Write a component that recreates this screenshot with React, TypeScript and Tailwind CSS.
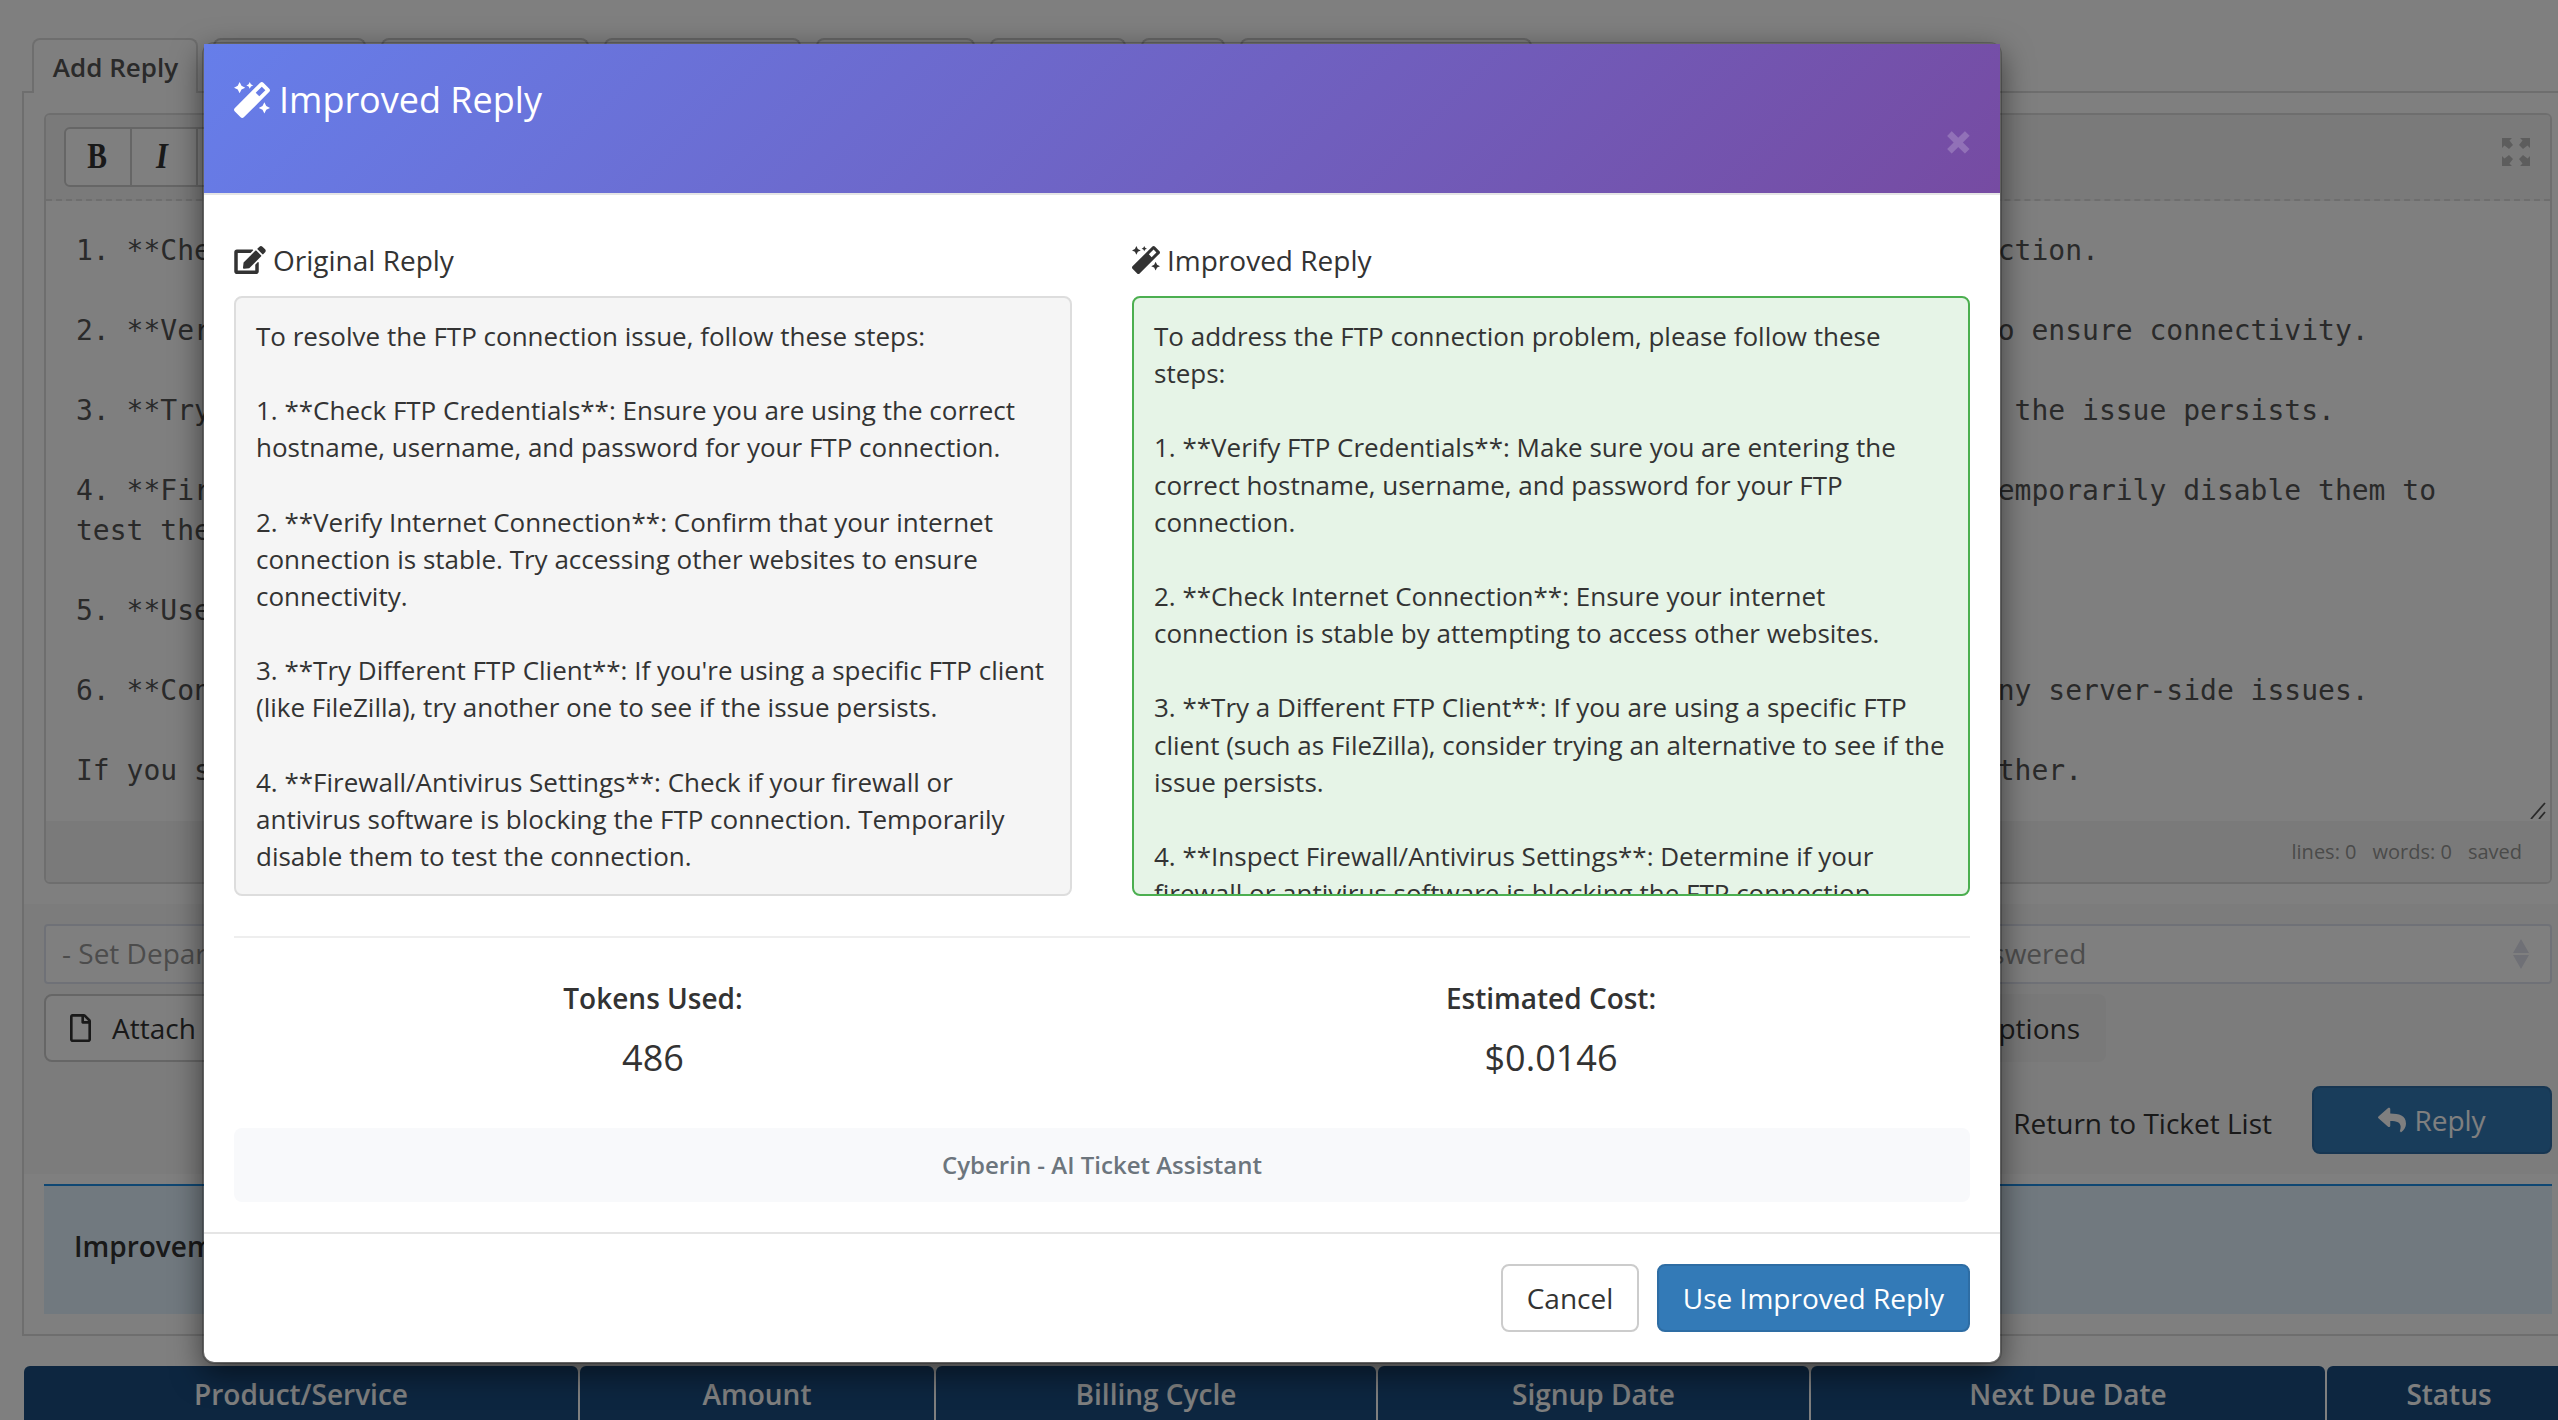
import React from "react";
import { FaMagic, FaEdit, FaRegFile, FaReply } from "react-icons/fa";

const sans = "font-['Open_Sans','Noto_Sans',sans-serif]";

const tabs = ["w-[153px]", "w-[208px]", "w-[197px]", "w-[159px]", "w-[136px]", "w-[84px]", "w-[292px]"];

const columns = [
  { label: "Product/Service", width: "w-[554px]" },
  { label: "Amount", width: "w-[354px]" },
  { label: "Billing Cycle", width: "w-[440px]" },
  { label: "Signup Date", width: "w-[431px]" },
  { label: "Next Due Date", width: "w-[514px]" },
  { label: "Status", width: "w-[244px]" },
];

const draft = `1. **Check FTP Credentials**: Ensure you are using the correct hostname, username, and password for your FTP connection.

2. **Verify Internet Connection**: Confirm that your internet connection is stable. Try accessing other websites to ensure connectivity.

3. **Try Different FTP Client**: If you're using a specific FTP client (like FileZilla), try another one to see if the issue persists.

4. **Firewall/Antivirus Settings**: Check if your firewall or antivirus software is blocking the FTP connection. Temporarily disable them to
test the connection.

5. **Use Passive Mode**: Switch the client to passive mode.

6. **Contact Hosting Provider**: If none of the above works, contact your hosting provider to check if there are any server-side issues.

If you still experience problems after the steps, please share the exact error message so that we can help you further.`;

const original = `To resolve the FTP connection issue, follow these steps:

1. **Check FTP Credentials**: Ensure you are using the correct hostname, username, and password for your FTP connection.

2. **Verify Internet Connection**: Confirm that your internet connection is stable. Try accessing other websites to ensure connectivity.

3. **Try Different FTP Client**: If you're using a specific FTP client (like FileZilla), try another one to see if the issue persists.

4. **Firewall/Antivirus Settings**: Check if your firewall or antivirus software is blocking the FTP connection. Temporarily disable them to test the connection.`;

const improved = `To address the FTP connection problem, please follow these steps:

1. **Verify FTP Credentials**: Make sure you are entering the correct hostname, username, and password for your FTP connection.

2. **Check Internet Connection**: Ensure your internet connection is stable by attempting to access other websites.

3. **Try a Different FTP Client**: If you are using a specific FTP client (such as FileZilla), consider trying an alternative to see if the issue persists.

4. **Inspect Firewall/Antivirus Settings**: Determine if your firewall or antivirus software is blocking the FTP connection.`;

function FullscreenIcon() {
  return (
    <svg viewBox="0 0 28 28" className="h-7 w-7" fill="currentColor">
      <path d="M0 0h10L7.500 2.500 11 7l-4 4-4.500-3.500L0 10z" />
      <path d="M28 0v10l-2.500-2.500L21 11l-4-4 3.500-4.500L18 0z" />
      <path d="M0 28V18l2.500 2.500L7 17l4 4-3.500 4.500L10 28z" />
      <path d="M28 28H18l2.500-2.500L17 21l4-4 4.500 3.500L28 18z" />
    </svg>
  );
}

function TicketPage() {
  return (
    <div className="w-[2576px] pt-[38px] pl-[22px] text-[28px] leading-[40px] text-[#333]">
      <div className="relative z-10 -mb-0.5 flex gap-[15px] pl-2.5">
        <div className="h-[55px] w-[166px] rounded-t-lg border-2 border-b-0 border-[#ddd] bg-white pt-[7px] pl-px text-center text-[26px] leading-[40px] font-semibold text-[#555]">
          Add Reply
        </div>
        {tabs.map((w, i) => (
          <div key={i} className={`${w} h-[53px] rounded-t-lg border-2 border-b-0 border-[#ccc] bg-[#f8f8f8]`} />
        ))}
      </div>
      <div className="h-[1245px] border-2 border-[#ddd]">
        <div className="px-5 pt-5">
          <div className="h-[771px] w-[2508px] overflow-hidden rounded-md border-2 border-[#ddd]">
            <div className="flex h-[86px] items-center justify-between border-b-2 border-dashed border-[#ddd] bg-[#f5f5f5] pr-[20px] pl-[18px]">
              <div className="flex h-[60px] w-[400px] rounded-md border-2 border-[#ccc] bg-white font-['Liberation_Serif',serif] text-[36px] leading-[54px] text-[#333]">
                <span className="w-[66px] border-r-2 border-[#ccc] pr-0.5 text-center font-bold">
                  <span className="inline-block scale-x-[0.82]">B</span>
                </span>
                <span className="w-[66px] border-r-2 border-[#ccc] pr-1 text-center font-bold italic">
                  <span className="inline-block scale-x-[0.85]">I</span>
                </span>
              </div>
              <div className="-mt-2.5 text-[#bbb]">
                <FullscreenIcon />
              </div>
            </div>
            <div className="relative h-[620px] pt-[30px] pl-[30px] font-['DejaVu_Sans_Mono',monospace] whitespace-pre text-[#555]">
              {draft}
              <svg viewBox="0 0 16 18" className="absolute right-1 bottom-0.5 h-[18px] w-4" stroke="#555" strokeWidth="1.8">
                <path d="M1 18L15 2M9 18L15 11" />
              </svg>
            </div>
            <div className="flex h-[61px] items-center justify-end gap-4 bg-[#f5f5f5] pr-7 text-[20px] text-[#959694]">
              <span>lines: 0</span>
              <span>words: 0</span>
              <span>saved</span>
            </div>
          </div>
        </div>
        <div className="mt-5 h-[270px] bg-[#f8f8f8] px-5 pt-5">
          <div className="flex h-[60px] w-[2508px] items-center justify-between rounded-sm border-2 border-[#dfe3ee] bg-white pr-[21px] pl-4 text-[28px] text-[#999]">
            <span className="-mt-0.5">- Set Department -</span>
            <span className="-mt-0.5 ml-auto w-[639px]">Set to Answered</span>
            <svg viewBox="0 0 16 30" className="h-[30px] w-4" fill="#dfe1ec">
              <path d="M8 0l8 14H0zM8 30l8-14H0z" />
            </svg>
          </div>
          <div className="mt-2.5 flex h-[68px] w-[2062px] justify-between leading-[64px]">
            <div className="flex w-[300px] items-center gap-[21px] rounded-lg border-2 border-[#ccc] bg-white pl-[24px]">
              <FaRegFile className="h-7 w-[21px]" />
              <span>Attach Files</span>
            </div>
            <div className="w-[220px] rounded-lg bg-[#f2f2f2] pt-0.5 pr-[26px] text-right">More Options</div>
          </div>
          <div className="mt-6 flex w-[2508px] items-center justify-end gap-10">
            <span className="pt-1.5 text-[28px]">Return to Ticket List</span>
            <div className="flex h-[68px] w-[240px] items-center justify-center gap-2 rounded-lg border-2 border-[#2e6da4] bg-[#337ab7] text-[28px] text-white">
              <FaReply className="h-7 w-7" />
              <span>Reply</span>
            </div>
          </div>
        </div>
        <div className="mt-2.5 ml-5 h-[130px] w-[2508px] border-t-2 border-[#1e8fe6] bg-[#e3f2ff] pt-[40px] pl-[30px] font-semibold text-[#333]">
          Improvement Suggestions
        </div>
      </div>
      <div className="mt-[30px] ml-0.5 flex gap-0.5">
        {columns.map((c) => (
          <div key={c.label} className={`${c.width} h-[54px] shrink-0 rounded-t-md bg-[#1a4d80] pt-2 text-center font-semibold text-white`}>
            {c.label}
          </div>
        ))}
      </div>
    </div>
  );
}

function ReplyPanel({ icon, title, text, tone }: { icon: React.ReactNode; title: string; text: string; tone: string }) {
  return (
    <div className="w-[838px]">
      <h5 className="-mt-px mb-[21px] flex h-[31px] items-center gap-[7px] text-[28px] font-normal">
        {icon}
        <span>{title}</span>
      </h5>
      <div className={`${tone} h-[600px] overflow-hidden rounded-lg border-2 p-5 text-[26px] leading-[37.14px] whitespace-pre-wrap`}>
        {text}
      </div>
    </div>
  );
}

function Stat({ label, value }: { label: string; value: string }) {
  return (
    <div className="w-[838px] text-center">
      <div className="text-[28px] leading-[40px] font-semibold">{label}</div>
      <div className="mt-5 text-[36px] leading-[40px]">{value}</div>
    </div>
  );
}

function ReplyModal() {
  return (
    <div className="absolute top-[42px] left-[202px] h-[1322px] w-[1800px] rounded-xl border-2 border-black/20 bg-white bg-clip-padding text-[#333] shadow-[0_10px_30px_rgba(0,0,0,0.5)]">
      <div className="h-[151px] border-b-2 border-[#e5e5e5] bg-[linear-gradient(135deg,#667eea_0%,#764ba2_100%)] bg-clip-padding px-[30px] pt-[30px] text-white">
        <h4 className="flex h-[51px] items-center gap-[9px] text-[36px] font-medium">
          <FaMagic className="h-9 w-9" />
          <span>Improved Reply</span>
        </h4>
        <div className="-mt-[5px] -mr-[3px] text-right text-[50px] leading-[42px] font-extrabold opacity-20">×</div>
      </div>
      <div className="h-[1037px] px-[30px] pt-[50px]">
        <div className="flex justify-between">
          <ReplyPanel
            icon={<FaEdit className="h-7 w-8" />}
            title="Original Reply"
            text={original}
            tone="border-[#ddd] bg-[#f5f5f5]"
          />
          <ReplyPanel
            icon={<FaMagic className="h-7 w-7" />}
            title="Improved Reply"
            text={improved}
            tone="border-[#4caf50] bg-[#e6f4e7]"
          />
        </div>
        <div className="mt-10 flex justify-between border-t-2 border-[#eee] pt-10">
          <Stat label="Tokens Used:" value="486" />
          <Stat label="Estimated Cost:" value="$0.0146" />
        </div>
        <div className="mt-[50px] h-[74px] rounded-lg bg-[#f8f9fb] text-center text-[24px] leading-[74px] font-semibold text-[#6c757d]">
          Cyberin - AI Ticket Assistant
        </div>
      </div>
      <div className="flex justify-end gap-[18px] border-t-2 border-[#e5e5e5] p-[30px] text-[28px]">
        <button className="h-[68px] w-[138px] rounded-lg border-2 border-[#ccc]">Cancel</button>
        <button className="h-[68px] w-[313px] rounded-lg border-2 border-[#2e6da4] bg-[#337ab7] text-white">
          Use Improved Reply
        </button>
      </div>
    </div>
  );
}

export default function App() {
  return (
    <div className={`relative h-[1420px] w-[2558px] overflow-hidden bg-white ${sans}`}>
      <TicketPage />
      <div className="absolute inset-0 z-20 bg-black/50" />
      <div className="absolute inset-0 z-30">
        <ReplyModal />
      </div>
    </div>
  );
}
